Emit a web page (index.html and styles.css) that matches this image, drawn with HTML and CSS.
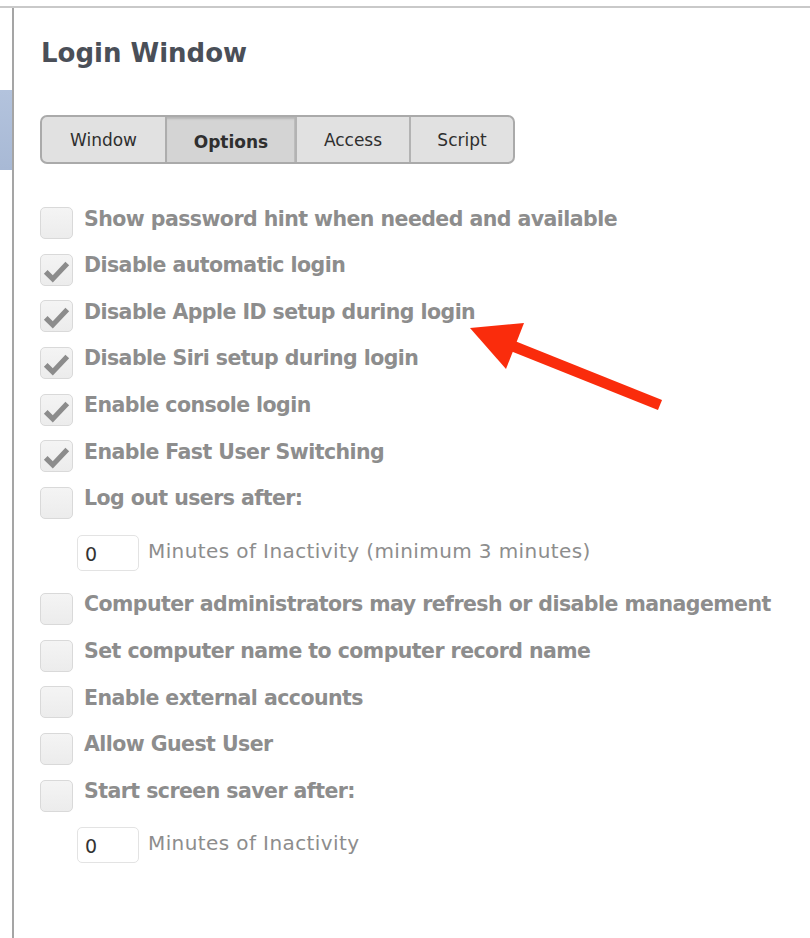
FILE: index.html
```html
<!DOCTYPE html>
<html>
<head>
<meta charset="utf-8">
<link rel="stylesheet" href="styles.css">
</head>
<body>
<div class="topline"></div>
<div class="frame">
  <aside class="side"><div class="sel"></div></aside>
  <main class="pane">
    <h1 class="title">Login Window</h1>
    <div class="seg">
      <div class="tab t1">Window</div>
      <div class="tab t2 on">Options</div>
      <div class="tab t3">Access</div>
      <div class="tab t4">Script</div>
    </div>
    <ul class="opts">
      <li class="row"><span class="box"></span><span class="lbl">Show password hint when needed and available</span></li>
      <li class="row"><span class="box"><svg class="chk" viewBox="0 0 33 32"><path d="M5 18 L12.5 25.5 L28 9" /></svg></span><span class="lbl">Disable automatic login</span></li>
      <li class="row"><span class="box"><svg class="chk" viewBox="0 0 33 32"><path d="M5 18 L12.5 25.5 L28 9" /></svg></span><span class="lbl">Disable Apple ID setup during login</span></li>
      <li class="row"><span class="box"><svg class="chk" viewBox="0 0 33 32"><path d="M5 18 L12.5 25.5 L28 9" /></svg></span><span class="lbl">Disable Siri setup during login</span></li>
      <li class="row"><span class="box"><svg class="chk" viewBox="0 0 33 32"><path d="M5 18 L12.5 25.5 L28 9" /></svg></span><span class="lbl">Enable console login</span></li>
      <li class="row"><span class="box"><svg class="chk" viewBox="0 0 33 32"><path d="M5 18 L12.5 25.5 L28 9" /></svg></span><span class="lbl">Enable Fast User Switching</span></li>
      <li class="row"><span class="box"></span><span class="lbl">Log out users after:</span></li>
      <li class="row inrow"><span class="field">0</span><span class="note">Minutes of Inactivity (minimum 3 minutes)</span></li>
      <li class="row"><span class="box"></span><span class="lbl">Computer administrators may refresh or disable management</span></li>
      <li class="row"><span class="box"></span><span class="lbl">Set computer name to computer record name</span></li>
      <li class="row"><span class="box"></span><span class="lbl">Enable external accounts</span></li>
      <li class="row"><span class="box"></span><span class="lbl">Allow Guest User</span></li>
      <li class="row"><span class="box"></span><span class="lbl">Start screen saver after:</span></li>
      <li class="row inrow"><span class="field">0</span><span class="note">Minutes of Inactivity</span></li>
    </ul>
  </main>
</div>
<svg class="arrow" width="810" height="938" viewBox="0 0 810 938">
  <line x1="660" y1="405" x2="505" y2="343" stroke="#fa2c0c" stroke-width="11" />
  <polygon points="470,328 524,323 506,369" fill="#fa2c0c" />
</svg>
</body>
</html>
```

FILE: styles.css
```css
html, body {
  margin: 0;
  padding: 0;
  background: #ffffff;
}
body {
  width: 810px;
  height: 938px;
  overflow: hidden;
  position: relative;
  font-family: "DejaVu Sans", "Liberation Sans", sans-serif;
}
.topline {
  height: 6px;
  border-bottom: 2px solid #c9c9c9;
}
.frame {
  display: flex;
  height: 930px;
}
.side {
  width: 12px;
  flex: none;
}
.sel {
  margin-top: 82px;
  height: 80px;
  background: linear-gradient(#b3c3dd, #a8b9d5);
}
.pane {
  flex: 1;
  border-left: 2px solid #a5a5a5;
  padding: 30px 0 0 26px;
}
.title {
  margin: 0;
  padding-left: 1px;
  font-size: 26px;
  line-height: 31px;
  font-weight: bold;
  color: #4a4f58;
}
.seg {
  margin-top: 46px;
  display: flex;
  width: 471px;
  height: 45px;
  border: 2px solid #aaaaaa;
  border-radius: 7px;
  background: #e1e1e1;
  overflow: hidden;
}
.tab {
  display: flex;
  align-items: center;
  justify-content: center;
  font-size: 17px;
  color: #2f2f2f;
  padding-top: 1px;
  box-sizing: border-box;
}
.t1 { width: 123px; }
.t2 { width: 130px; border-left: 2px solid #adadad; }
.t3 { width: 114px; border-left: 2px solid #b3b3b3; }
.t4 { width: 104px; border-left: 2px solid #b3b3b3; }
.tab.on {
  background: #d4d4d4;
  font-weight: bold;
  padding-top: 4px;
  box-shadow: inset 0 3px 2px -1px #b6b6b6, inset -1px 0 0 #bdbdbd;
}
.opts {
  list-style: none;
  margin: 43px 0 0 0;
  padding: 0;
}
.row {
  display: flex;
  align-items: flex-start;
  height: 46.67px;
}
.box {
  flex: none;
  width: 31px;
  height: 30px;
  border: 1px solid #d9d9d9;
  border-radius: 5px;
  background: linear-gradient(#f4f4f4, #ececec);
  margin-right: 11px;
  display: flex;
}
.chk {
  width: 31px;
  height: 30px;
}
.chk path {
  fill: none;
  stroke: #8c8c8c;
  stroke-width: 5.5;
  stroke-linejoin: miter;
}
.lbl {
  font-size: 20.5px;
  line-height: 24px;
  font-weight: bold;
  letter-spacing: -0.55px;
  color: #8d8d8d;
  margin-top: -0.5px;
  white-space: nowrap;
}
.inrow {
  height: 59.33px;
}
.field {
  flex: none;
  box-sizing: border-box;
  width: 62px;
  height: 36px;
  margin: 1px 0 0 37px;
  border: 1px solid #e3e3e3;
  border-radius: 5px;
  padding: 7px 0 0 7px;
  font-size: 19px;
  line-height: 22px;
  color: #333333;
}
.note {
  margin: 5px 0 0 9px;
  font-size: 20px;
  line-height: 24px;
  letter-spacing: 0.4px;
  color: #8d8d8d;
  white-space: nowrap;
}
.arrow {
  position: absolute;
  left: 0;
  top: 0;
  pointer-events: none;
}
```
